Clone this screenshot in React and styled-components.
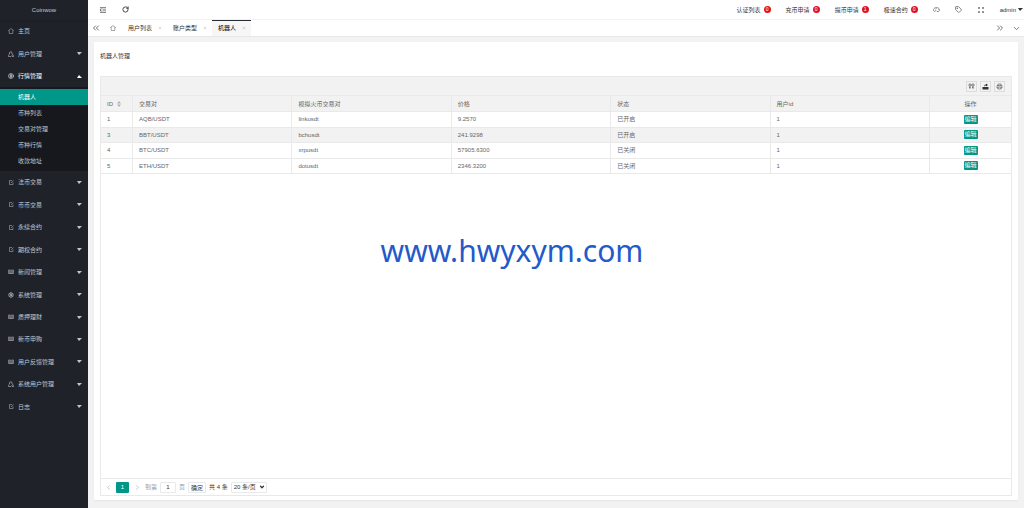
import React from 'react';
import styled, { createGlobalStyle, css } from 'styled-components';
import {
  ChevronDown,
  ChevronLeft,
  ChevronRight,
  ChevronsLeft,
  ChevronsRight,
  CircleDollarSign,
  RotateCw,
  Settings,
  Tag,
  X,
} from 'lucide-react';

const menu = [
  { label: '主页', icon: 'home', leaf: true },
  { label: '用户管理', icon: 'user' },
  {
    label: '行情管理',
    icon: 'dollar',
    children: ['机器人', '币种列表', '交易对管理', '币种行情', '收款地址'],
  },
  { label: '法币交易', icon: 'edit' },
  { label: '币币交易', icon: 'edit' },
  { label: '永续合约', icon: 'edit' },
  { label: '期权合约', icon: 'edit' },
  { label: '新闻管理', icon: 'read' },
  { label: '系统管理', icon: 'gear' },
  { label: '质押理财', icon: 'read' },
  { label: '新币申购', icon: 'read' },
  { label: '用户反馈管理', icon: 'read' },
  { label: '系统用户管理', icon: 'user' },
  { label: '日志', icon: 'edit' },
];

const notices = [
  { label: '认证列表', count: 0 },
  { label: '充币申请', count: 0 },
  { label: '提币申请', count: 1 },
  { label: '极速合约', count: 0 },
];

const tabs = ['用户列表', '账户类型', '机器人'];

const robots = [
  { id: 1, pair: 'AQB/USDT', source: 'linkusdt', price: '9.2570', status: '已开启', user: 1 },
  { id: 3, pair: 'BBT/USDT', source: 'bchusdt', price: '241.9298', status: '已开启', user: 1 },
  { id: 4, pair: 'BTC/USDT', source: 'xrpusdt', price: '57905.6300', status: '已关闭', user: 1 },
  { id: 5, pair: 'ETH/USDT', source: 'dotusdt', price: '2346.3200', status: '已关闭', user: 1 },
];

const HomeIcon = () => (
  <svg width="6" height="6" viewBox="0 0 12 12" fill="none" stroke="currentColor">
    <path d="M6 1L1 5h1.500v6h7V5H11z" />
  </svg>
);

const UserIcon = () => (
  <svg width="6" height="6" viewBox="0 0 12 12" fill="none" stroke="currentColor" strokeWidth="1.200">
    <path d="M3 6V4a2.500 2.500 0 0 1 5 0v2M3 6C1.500 7 1 8 1 11h5M8 6c2 1 3 2 3 5H8V8" />
  </svg>
);

const EditIcon = () => (
  <svg width="5" height="5" viewBox="0 0 10 10" fill="none" stroke="currentColor">
    <path d="M6 1H1v8h7V5M4 6l5-5" />
  </svg>
);

const ReadIcon = () => (
  <svg width="6" height="6" viewBox="0 0 12 12" fill="none" stroke="currentColor">
    <path d="M1 2h4l1 1 1-1h4v7H7l-1 1-1-1H1zM6 3v7" />
    <path d="M2 4h3M2 6h3M2 8h3M7 4h3M7 6h3M7 8h3" />
  </svg>
);

const ShrinkIcon = () => (
  <svg width="6" height="6" viewBox="0 0 12 12" fill="none" stroke="currentColor" strokeWidth="1.500">
    <path d="M0 1.500h12M5 6h7M0 10.500h12M3 4L0 6l3 2" />
  </svg>
);

const ThemeIcon = () => (
  <svg width="7" height="7" viewBox="0 0 14 14" fill="none" stroke="currentColor">
    <path d="M3 11C-1 9 1 3 7 3s8 6 4 8H8c-1 0-1-2-2-2s-1 2-3 2z" />
    <path d="M4 6h1M7 5h1M10 7h1" strokeWidth="1.500" />
  </svg>
);

const FullIcon = () => (
  <svg width="6" height="6" viewBox="0 0 12 12" fill="none" stroke="currentColor">
    <path d="M1 4V1h3M8 1h3v3M11 8v3H8M4 11H1V8M1 1l3 3M11 1L8 4M11 11L8 8M1 11l3-3" />
  </svg>
);

const ColumnsIcon = () => (
  <svg width="7" height="7" viewBox="0 0 14 14" fill="none" stroke="currentColor">
    <path d="M2 2h4v4H2zM8 2h4v4H8zM4 6v6M10 6v6M2 9h3M8 9h3" />
  </svg>
);

const ExportIcon = () => (
  <svg width="7" height="7" viewBox="0 0 14 14" fill="currentColor">
    <path d="M1 8h12v5H1zM4 7c0-3 2-4 4-4V1l4 3-4 3V5C6 5 5 6 4 7z" />
  </svg>
);

const PrintIcon = () => (
  <svg width="7" height="7" viewBox="0 0 14 14" fill="none" stroke="currentColor">
    <path d="M4 5V2h6v3M4 10H2V5h10v5h-2M4 8h6v4H4z" />
  </svg>
);

const SortIcon = () => (
  <svg width="4" height="6" viewBox="0 0 8 12" fill="#b2b2b2">
    <path d="M4 0l4 5H0zM4 12l4-5H0z" />
  </svg>
);

const menuIcons = {
  home: <HomeIcon />,
  user: <UserIcon />,
  dollar: <CircleDollarSign size={6} />,
  edit: <EditIcon />,
  read: <ReadIcon />,
  gear: <Settings size={6} strokeWidth={3} />,
};

const App = () => (
  <Layout>
    <GlobalStyle />
    <Sidebar>
      <Logo>Coinwow</Logo>
      <Menu>
        {menu.map(item => (
          <MenuItem key={item.label}>
            <MenuLink href="#" $open={!!item.children}>
              <MenuIcon>{menuIcons[item.icon]}</MenuIcon>
              {item.label}
              {!item.leaf && <Caret $up={!!item.children} />}
            </MenuLink>
            {item.children && (
              <SubMenu>
                {item.children.map((child, i) => (
                  <li key={child}>
                    <SubLink href="#" $active={i === 0}>
                      {child}
                    </SubLink>
                  </li>
                ))}
              </SubMenu>
            )}
          </MenuItem>
        ))}
      </Menu>
    </Sidebar>
    <Main>
      <Header>
        <IconButton aria-label="收起"><ShrinkIcon /></IconButton>
        <IconButton aria-label="刷新"><RotateCw size={7} strokeWidth={3} /></IconButton>
        <Notices>
          {notices.map(notice => (
            <Notice href="#" key={notice.label}>
              {notice.label}
              <Badge>{notice.count}</Badge>
            </Notice>
          ))}
        </Notices>
        <IconButton aria-label="主题"><ThemeIcon /></IconButton>
        <IconButton aria-label="便签"><Tag size={7} /></IconButton>
        <IconButton aria-label="全屏"><FullIcon /></IconButton>
        <Account>
          admin
          <Caret />
        </Account>
      </Header>
      <TabBar>
        <TabControl aria-label="向左"><ChevronsLeft size={10} /></TabControl>
        <TabControl aria-label="主页" $wide><HomeIcon /></TabControl>
        {tabs.map((tab, i) => (
          <Tab key={tab} href="#" $active={i === tabs.length - 1}>
            {tab}
            <X size={4} color="#999" />
          </Tab>
        ))}
        <Spacer />
        <TabControl aria-label="向右"><ChevronsRight size={10} /></TabControl>
        <TabControl aria-label="更多"><ChevronDown size={9} /></TabControl>
      </TabBar>
      <Card>
        <CardTitle>机器人管理</CardTitle>
        <TableView>
          <Toolbar>
            <ToolButton aria-label="筛选列"><ColumnsIcon /></ToolButton>
            <ToolButton aria-label="导出"><ExportIcon /></ToolButton>
            <ToolButton aria-label="打印"><PrintIcon /></ToolButton>
          </Toolbar>
          <Table>
            <thead>
              <tr>
                <Th $width="32px">
                  <SortLabel>
                    ID
                    <SortIcon />
                  </SortLabel>
                </Th>
                <Th>交易对</Th>
                <Th>模拟火币交易对</Th>
                <Th>价格</Th>
                <Th>状态</Th>
                <Th>用户id</Th>
                <Th $width="81px" $center>操作</Th>
              </tr>
            </thead>
            <tbody>
              {robots.map(robot => (
                <Row key={robot.id} $hovered={robot.id === 3}>
                  <Td>{robot.id}</Td>
                  <Td>{robot.pair}</Td>
                  <Td>{robot.source}</Td>
                  <Td>{robot.price}</Td>
                  <Td>{robot.status}</Td>
                  <Td>{robot.user}</Td>
                  <Td $center>
                    <EditButton>编辑</EditButton>
                  </Td>
                </Row>
              ))}
            </tbody>
          </Table>
          <Pager>
            <PageButton aria-label="上一页"><ChevronLeft size={7} /></PageButton>
            <PageButton $current>1</PageButton>
            <PageButton aria-label="下一页"><ChevronRight size={7} /></PageButton>
            <PageLabel>
              到第
              <PageInput defaultValue="1" />
              页
            </PageLabel>
            <ConfirmButton>确定</ConfirmButton>
            <span>共 4 条</span>
            <SelectBox>
              <PageSelect aria-label="每页条数" defaultValue="20">
                <option value="20">20 条/页</option>
                <option value="50">50 条/页</option>
              </PageSelect>
              <ChevronDown size={6} strokeWidth={5} />
            </SelectBox>
          </Pager>
        </TableView>
      </Card>
    </Main>
    <Watermark>www.hwyxym.com</Watermark>
  </Layout>
);

const GlobalStyle = createGlobalStyle`
  * {
    box-sizing: border-box;
  }

  body {
    margin: 0;
    color: #333;
    background: #f2f2f2;
  }

  body, button, input, select {
    font-family: 'Liberation Sans', 'Noto Sans CJK SC', sans-serif;
    font-size: 6px;
    line-height: 10px;
  }

  button {
    padding: 0;
    border: 0;
    color: inherit;
    background: none;
  }

  a {
    color: inherit;
    text-decoration: none;
  }

  ul {
    margin: 0;
    padding: 0;
    list-style: none;
  }

  svg {
    flex: none;
  }
`;

const Layout = styled.div`
  display: flex;
  position: relative;
  min-height: 100vh;
`;

const Sidebar = styled.aside`
  flex: none;
  width: 88px;
  color: #c4c5c8;
  background: #20222a;
`;

const Logo = styled.div`
  height: 20px;
  line-height: 20px;
  text-align: center;
  box-shadow: 0 1px 2px rgba(0, 0, 0, 0.15);
`;

const Menu = styled.ul`
  display: flex;
  flex-direction: column;
  min-height: 398px;
`;

const MenuItem = styled.li`
  display: flex;
  flex: 1 0 auto;
  flex-direction: column;
`;

const MenuLink = styled.a`
  display: flex;
  flex: 1 0 22px;
  align-items: center;
  padding: 0 6px 0 8px;
  color: ${props => (props.$open ? '#fff' : 'inherit')};
`;

const MenuIcon = styled.span`
  display: flex;
  justify-content: center;
  width: 6px;
  margin-right: 4px;
`;

const Caret = styled.i`
  margin-left: auto;
  border: solid transparent;
  border-width: ${props => (props.$up ? '0 3px 3px 2px' : '3px 3px 0 2px')};
  border-${props => (props.$up ? 'bottom' : 'top')}-color: currentColor;
`;

const SubMenu = styled.ul`
  padding: 2px 0;
  background: #16181d;
`;

const SubLink = styled.a`
  display: block;
  height: 16px;
  padding-left: 18px;
  line-height: 16px;
  ${props =>
    props.$active &&
    css`
      color: #fff;
      background: #009688;
    `}
`;

const Main = styled.main`
  display: flex;
  flex: 1;
  flex-direction: column;
  min-width: 0;
`;

const Header = styled.header`
  display: flex;
  align-items: center;
  height: 20px;
  padding: 0 1px 0 4px;
  background: #fff;
  border-bottom: 1px solid #f2f2f2;
`;

const IconButton = styled.button`
  display: flex;
  align-items: center;
  justify-content: center;
  width: 22px;
  height: 19px;
`;

const Notices = styled.nav`
  display: flex;
  gap: 15px;
  margin: 0 8px 0 auto;
`;

const Notice = styled.a`
  display: flex;
  align-items: center;
  gap: 3px;
`;

const Badge = styled.span`
  width: 7px;
  height: 7px;
  border-radius: 50%;
  color: #fff;
  font-size: 5px;
  line-height: 7px;
  text-align: center;
  background: #e0141e;
`;

const Account = styled.button`
  display: flex;
  align-items: center;
  gap: 2px;
  margin-left: 8px;
`;

const TabBar = styled.nav`
  display: flex;
  height: 17px;
  background: #fff;
  border-bottom: 1px solid #e8e8e8;
`;

const TabControl = styled.button`
  display: flex;
  align-items: center;
  justify-content: center;
  width: ${props => (props.$wide ? '18px' : '16px')};
  color: #555;
`;

const Tab = styled.a`
  display: flex;
  align-items: center;
  gap: 6px;
  padding: 0 5px 0 6px;
  ${props =>
    props.$active &&
    css`
      color: #000;
      background: #f6f6f6;
      box-shadow: inset 0 1px #292b34;
    `}
`;

const Spacer = styled.div`
  flex: 1;
`;

const Card = styled.section`
  display: flex;
  flex: 1;
  flex-direction: column;
  margin: 5px 6px 8px;
  padding: 6px 6px 4px;
  background: #fff;
  border-radius: 1px;
  box-shadow: 0 1px 2px rgba(0, 0, 0, 0.05);
`;

const CardTitle = styled.h1`
  margin: 3px 0 15px;
  font-size: 6px;
  font-weight: 400;
  line-height: 10px;
`;

const TableView = styled.div`
  display: flex;
  flex: 1;
  flex-direction: column;
  color: #666;
  border: 1px solid #e9e9e9;
`;

const Toolbar = styled.div`
  display: flex;
  align-items: center;
  justify-content: flex-end;
  gap: 3px;
  height: 19px;
  padding: 0 6px;
  background: #f2f2f2;
  border-bottom: 1px solid #e9e9e9;
`;

const ToolButton = styled.button`
  display: flex;
  align-items: center;
  justify-content: center;
  width: 11px;
  height: 11px;
  color: #333;
  border: 1px solid #dcdcdc;
`;

const Table = styled.table`
  width: 100%;
  height: 78px;
  table-layout: fixed;
  border-collapse: separate;
  border-spacing: 0;
`;

const cell = css`
  padding: 0 6px;
  font-weight: 400;
  text-align: ${props => (props.$center ? 'center' : 'left')};
  border: solid #e9e9e9;
  border-width: 0 1px 1px 0;

  &:last-child {
    border-right: 0;
  }
`;

const Th = styled.th`
  ${cell}
  width: ${props => props.$width || 'auto'};
  height: 16px;
  background: #f2f2f2;
`;

const Td = styled.td`
  ${cell}
`;

const Row = styled.tr`
  background: ${props => (props.$hovered ? '#f2f2f2' : '#fff')};
`;

const SortLabel = styled.span`
  display: flex;
  align-items: center;
  gap: 4px;
`;

const EditButton = styled.button`
  display: block;
  width: 14px;
  height: 9px;
  margin: 0 auto;
  color: #fff;
  line-height: 9px;
  background: #009688;
  border-radius: 1px;
`;

const Pager = styled.div`
  display: flex;
  align-items: center;
  gap: 3px;
  height: 17px;
  margin-top: auto;
  padding: 0 2px;
  color: #333;
  border-top: 1px solid #e9e9e9;
`;

const PageButton = styled.button`
  display: flex;
  align-items: center;
  justify-content: center;
  width: ${props => (props.$current ? '13px' : '10px')};
  height: 11px;
  color: ${props => (props.$current ? '#fff' : '#999')};
  background: ${props => (props.$current ? '#009688' : 'none')};
  border-radius: 1px;
`;

const PageLabel = styled.label`
  display: flex;
  align-items: center;
  gap: 3px;
  color: #999;
`;

const PageInput = styled.input`
  width: 16px;
  height: 11px;
  padding: 0;
  color: #333;
  text-align: center;
  border: 1px solid #e9e9e9;
  border-radius: 1px;
`;

const ConfirmButton = styled.button`
  width: 18px;
  height: 11px;
  border: 1px solid #e9e9e9;
  border-radius: 1px;
`;

const SelectBox = styled.span`
  display: flex;
  align-items: center;
  width: 36px;
  height: 11px;
  padding: 0 1px 0 2px;
  border: 1px solid #e9e9e9;
  border-radius: 1px;
`;

const PageSelect = styled.select`
  flex: 1;
  min-width: 0;
  height: 9px;
  padding: 0;
  color: #333;
  line-height: 9px;
  background: none;
  border: 0;
  appearance: none;
`;

const Watermark = styled.div`
  position: absolute;
  top: 50%;
  left: 50%;
  padding-bottom: 6px;
  color: #2459c9;
  font-family: 'Noto Sans', sans-serif;
  font-size: 30px;
  line-height: 40px;
  white-space: nowrap;
  transform: translate(-50%, -50%);
  pointer-events: none;
`;

export default App;
